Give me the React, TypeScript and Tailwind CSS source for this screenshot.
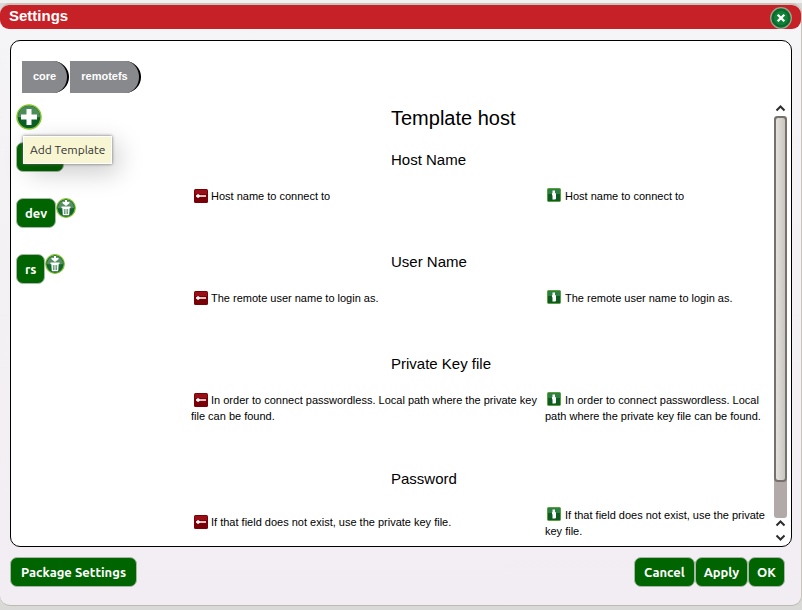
import type { ReactNode } from 'react';

const fields = [
  { name: 'Host Name', text: 'Host name to connect to' },
  { name: 'User Name', text: 'The remote user name to login as.' },
  {
    name: 'Private Key file',
    text: 'In order to connect passwordless. Local path where the private key file can be found.',
  },
  { name: 'Password', text: 'If that field does not exist, use the private key file.' },
];

function GreenButton({
  children,
  label,
  className = 'px-2',
}: {
  children?: ReactNode;
  label?: string;
  className?: string;
}) {
  return (
    <button
      type="button"
      aria-label={label}
      className={`h-[30px] rounded-[7px] border border-[#a9b8a6] bg-[#006400] pt-0.5 text-center align-top font-['Ubuntu','Noto_Sans',sans-serif] text-[13px] font-bold whitespace-nowrap text-white ${className}`}
    >
      {children}
    </button>
  );
}

function AddIcon() {
  return (
    <svg viewBox="0 0 26 26" className="block size-[26px]" aria-hidden="true">
      <circle cx="13" cy="13" r="12" fill="#0b5e26" stroke="#86c52e" strokeWidth="1.5" />
      <path d="M2 13a11 11 0 0 1 22 0Q13 15 2 13" fill="#4c8c5b" />
      <path d="M10.500 5h5v5.500h5.500v5h-5.500v5.500h-5v-5.500H5v-5h5.500z" fill="#fff" />
    </svg>
  );
}

function TrashIcon() {
  return (
    <svg viewBox="0 0 20 20" className="block size-5" aria-hidden="true">
      <circle cx="10" cy="10" r="9.300" fill="#12652f" stroke="#86c52e" strokeWidth="1.200" />
      <path d="M2 10a8 8 0 0 1 16 0Q10 11 2 10" fill="#568f65" />
      <path d="M9 2h2v2l2.500-.3v1.500L10 8 6.500 5.200V3.700L9 4z" fill="#fff" />
      <path d="M5.500 8.500h9v1.500h-9zM6.300 10h7.400l-.5 7.200H6.800z" fill="#fff" />
      <path d="M8.300 11l.2 5M10 11v5M11.700 11l-.2 5" stroke="#3f7d50" strokeWidth=".8" />
    </svg>
  );
}

function CloseIcon() {
  return (
    <svg viewBox="0 0 22 22" className="block size-[22px]" aria-hidden="true">
      <circle cx="11" cy="11" r="10.300" fill="#096b2b" stroke="#9aa58e" strokeWidth="1.300" />
      <circle cx="11" cy="11" r="7.500" fill="#108238" stroke="#0b6a2c" strokeWidth="1" />
      <path d="M7.700 7.700l6.600 6.600M14.300 7.700l-6.600 6.600" stroke="#fff" strokeWidth="2.300" />
    </svg>
  );
}

function KeyIcon() {
  return (
    <svg viewBox="0 0 14 14" className="mx-[3px] -mt-1 -mb-0.5 inline-block size-3.5 align-middle" aria-hidden="true">
      <rect width="14" height="14" rx="1.500" fill="#780006" />
      <path d="M1 1h12v4H1z" fill="#980f15" />
      <path d="M2 6.500l2-1.500 2 1.300h6v1.400H6L4 9 2 7.500z" fill="#fff" />
    </svg>
  );
}

function HandIcon() {
  return (
    <svg viewBox="0 0 14 14" className="-mt-1.5 mr-1 -mb-0.5 ml-0.5 inline-block size-3.5 align-middle" aria-hidden="true">
      <rect x=".5" y=".5" width="13" height="13" rx="1" fill="#0d5a22" stroke="#5b9e3c" />
      <path d="M1 1h12v5H1z" fill="#2c8042" />
      <path d="M5.500 2.500H8V5l1 .5v5.500l-1 .5H5.500V7.500L5 7V5.500l.5-.5z" fill="#fff" />
    </svg>
  );
}

function Chevron({ down = false }: { down?: boolean }) {
  return (
    <svg viewBox="0 0 13 13" className="block size-[13px] shrink-0" fill="none" stroke="#2d2d2d" strokeWidth="2" aria-hidden="true">
      <path d={down ? 'M2.500 4.500l4 4 4-4' : 'M2.500 7.500l4-4 4 4'} />
    </svg>
  );
}

function Tab({ children }: { children: ReactNode }) {
  return (
    <button
      type="button"
      className="h-8 rounded-r-[16px] border-r-2 border-black bg-[#88898d] px-[11px] pb-0.5 text-[11px] font-bold text-white"
    >
      {children}
    </button>
  );
}

function TemplateItem({ name }: { name: string }) {
  return (
    <li className="flex h-14 items-start">
      <GreenButton>{name}</GreenButton>
      <button type="button" aria-label={`Delete ${name}`}>
        <TrashIcon />
      </button>
    </li>
  );
}

export default function App() {
  return (
    <div className="flex h-screen flex-col bg-[#d9d9d7] pb-1 font-['Liberation_Sans',Arial,sans-serif] text-black">
      <div className="h-[3px] shrink-0 bg-[#f0f0ee]" />
      <main className="flex min-h-0 flex-1 flex-col rounded-[10px] border-t-2 border-r border-b border-t-[#c9c1b9] border-r-[#c9c5bd] border-b-[#bebab0] bg-linear-to-b from-[#f5f4f7] to-[#f2edf2]">
        <header className="flex h-6 shrink-0 items-start justify-between rounded-[9px] bg-[#c62127] px-[9px]">
          <h1 className="text-[15px] leading-[22px] font-bold text-white">Settings</h1>
          <button type="button" aria-label="Close" className="mt-0.5">
            <CloseIcon />
          </button>
        </header>

        <section className="mt-[11px] mr-[9px] ml-[10px] flex min-h-0 flex-1 flex-col rounded-[10px] border border-black bg-white pt-5 pr-1 pl-[5px]">
          <nav className="ml-1.5 flex shrink-0 gap-px">
            <Tab>core</Tab>
            <Tab>remotefs</Tab>
          </nav>

          <div className="mt-[10px] flex min-h-0 flex-1">
            <aside className="relative w-[175px] shrink-0 pt-px">
              <button type="button" aria-label="Add Template" className="block">
                <AddIcon />
              </button>
              <ul className="mt-3">
                <li className="h-14">
                  <GreenButton label="Template" className="w-12" />
                </li>
                <TemplateItem name="dev" />
                <TemplateItem name="rs" />
              </ul>
              <div
                role="tooltip"
                className="absolute top-[33px] left-[7px] flex h-7 items-center border border-white bg-[#f7f5d2] px-1.5 font-['Ubuntu','Noto_Sans',sans-serif] text-xs whitespace-nowrap text-[#333] shadow-[0_0_3px_#666,6px_8px_26px_rgba(0,0,0,0.22)]"
              >
                Add Template
              </div>
            </aside>

            <div className="min-w-0 flex-1 overflow-hidden">
              <div className="grid grid-cols-[200fr_154fr_229fr]">
                <h2 className="col-span-2 col-start-2 mt-[3px] mb-5 text-[20px] leading-6">Template host</h2>
              </div>
              {fields.map((field) => (
                <section key={field.name} className="mb-[45px] grid grid-cols-[200fr_154fr_229fr] items-center">
                  <h3 className="col-span-2 col-start-2 mb-[18px] h-5 text-[15px] leading-5">{field.name}</h3>
                  <p className="col-span-2 col-start-1 min-h-[19px] pr-1 text-[11px] leading-4">
                    <KeyIcon />
                    {field.text}
                  </p>
                  <p className="min-h-[19px] text-[11px] leading-4">
                    <HandIcon />
                    {field.text}
                  </p>
                </section>
              ))}
            </div>

            <div className="flex w-[13px] shrink-0 flex-col pb-0.5" aria-hidden="true">
              <Chevron />
              <div className="flex min-h-0 flex-1 flex-col rounded-[3px] bg-[#b2aaa8]">
                <div className="h-[91%] rounded-[4px] border-2 border-[#77716d] bg-linear-to-r from-[#e4e1de] to-[#c9c6c0]" />
              </div>
              <Chevron />
              <Chevron down />
            </div>
          </div>
        </section>

        <footer className="mt-[10px] mb-[18px] flex shrink-0 justify-between pr-4 pl-[10px]">
          <GreenButton className="px-2.5">Package Settings</GreenButton>
          <div className="flex">
            <GreenButton className="px-[9px]">Cancel</GreenButton>
            <GreenButton>Apply</GreenButton>
            <GreenButton>OK</GreenButton>
          </div>
        </footer>
      </main>
    </div>
  );
}
